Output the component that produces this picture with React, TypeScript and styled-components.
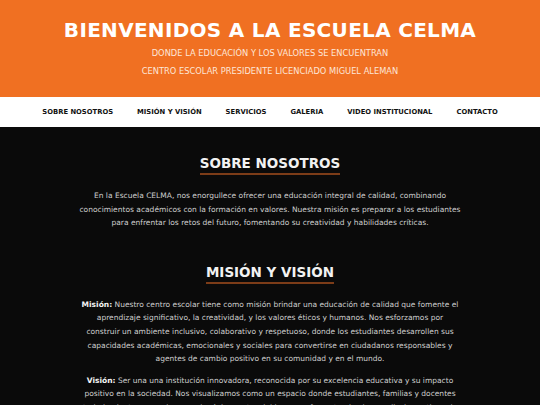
import React from "react";
import styled, { createGlobalStyle } from "styled-components";

const GlobalStyle = createGlobalStyle`
	html, body {
		margin: 0;
		padding: 0;
		background: #0a0a0a;
		font-family: "DejaVu Sans", Verdana, sans-serif;
	}
`;

const Header = styled.header`
	background: #f07022;
	color: #fff;
	text-align: center;
	padding: 18px 0 20px;
	height: 97px;
	box-sizing: border-box;
`;

const Title = styled.h1`
	margin: 0;
	font-size: 20px;
	font-weight: bold;
	letter-spacing: 0.3px;
	line-height: 24px;
`;

const Subtitle = styled.p`
	margin: 4px 0 0;
	font-size: 8.3px;
	line-height: 14px;
	color: #fde6d8;
`;

const Nav = styled.nav`
	background: #fff;
	height: 30px;
	display: flex;
	justify-content: center;
	align-items: center;
	gap: 24px;
`;

const NavLink = styled.a`
	font-size: 6.8px;
	font-weight: bold;
	color: #111;
	text-decoration: none;
	text-transform: uppercase;
`;

const Main = styled.main`
	background: #0a0a0a;
	padding: 26px 0 0;
`;

const Section = styled.section<{ $width: number }>`
	max-width: ${(p) => p.$width}px;
	margin: 0 auto 32px;
	text-align: center;
`;

const Heading = styled.h2`
	display: inline-block;
	margin: 0 0 14px;
	font-size: 13.5px;
	font-weight: bold;
	color: #f2f2f2;
	padding-bottom: 1px;
	border-bottom: 2px solid #7c3c18;
	line-height: 18px;
`;

const Paragraph = styled.p`
	margin: 0 0 8px;
	font-size: 7.5px;
	line-height: 13.6px;
	color: #cfcfcf;
`;

const Strong = styled.strong`
	color: #f5f5f5;
`;

const links = [
	"Sobre Nosotros",
	"Misión y Visión",
	"Servicios",
	"Galeria",
	"Video Institucional",
	"Contacto",
];

export default function App() {
	return (
		<>
			<GlobalStyle />
			<Header>
				<Title>BIENVENIDOS A LA ESCUELA CELMA</Title>
				<Subtitle>DONDE LA EDUCACIÓN Y LOS VALORES SE ENCUENTRAN</Subtitle>
				<Subtitle>CENTRO ESCOLAR PRESIDENTE LICENCIADO MIGUEL ALEMAN</Subtitle>
			</Header>
			<Nav>
				{links.map((l) => (
					<NavLink key={l} href="#">
						{l}
					</NavLink>
				))}
			</Nav>
			<Main>
				<Section $width={386}>
					<Heading>SOBRE NOSOTROS</Heading>
					<Paragraph>
						En la Escuela CELMA, nos enorgullece ofrecer una educación integral de
						calidad, combinando conocimientos académicos con la formación en
						valores. Nuestra misión es preparar a los estudiantes para enfrentar
						los retos del futuro, fomentando su creatividad y habilidades críticas.
					</Paragraph>
				</Section>
				<Section $width={378}>
					<Heading>MISIÓN Y VISIÓN</Heading>
					<Paragraph>
						<Strong>Misión:</Strong> Nuestro centro escolar tiene como misión
						brindar una educación de calidad que fomente el aprendizaje
						significativo, la creatividad, y los valores éticos y humanos. Nos
						esforzamos por construir un ambiente inclusivo, colaborativo y
						respetuoso, donde los estudiantes desarrollen sus capacidades
						académicas, emocionales y sociales para convertirse en ciudadanos
						responsables y agentes de cambio positivo en su comunidad y en el
						mundo.
					</Paragraph>
					<Paragraph>
						<Strong>Visión:</Strong> Ser una una institución innovadora,
						reconocida por su excelencia educativa y su impacto positivo en la
						sociedad. Nos visualizamos como un espacio donde estudiantes, familias
						y docentes trabajan juntos para alcanzar el máximo potencial humano,
						fomentando el aprendizaje continuo, la responsabilidad social y el
						respeto por la diversidad.
					</Paragraph>
				</Section>
			</Main>
		</>
	);
}
